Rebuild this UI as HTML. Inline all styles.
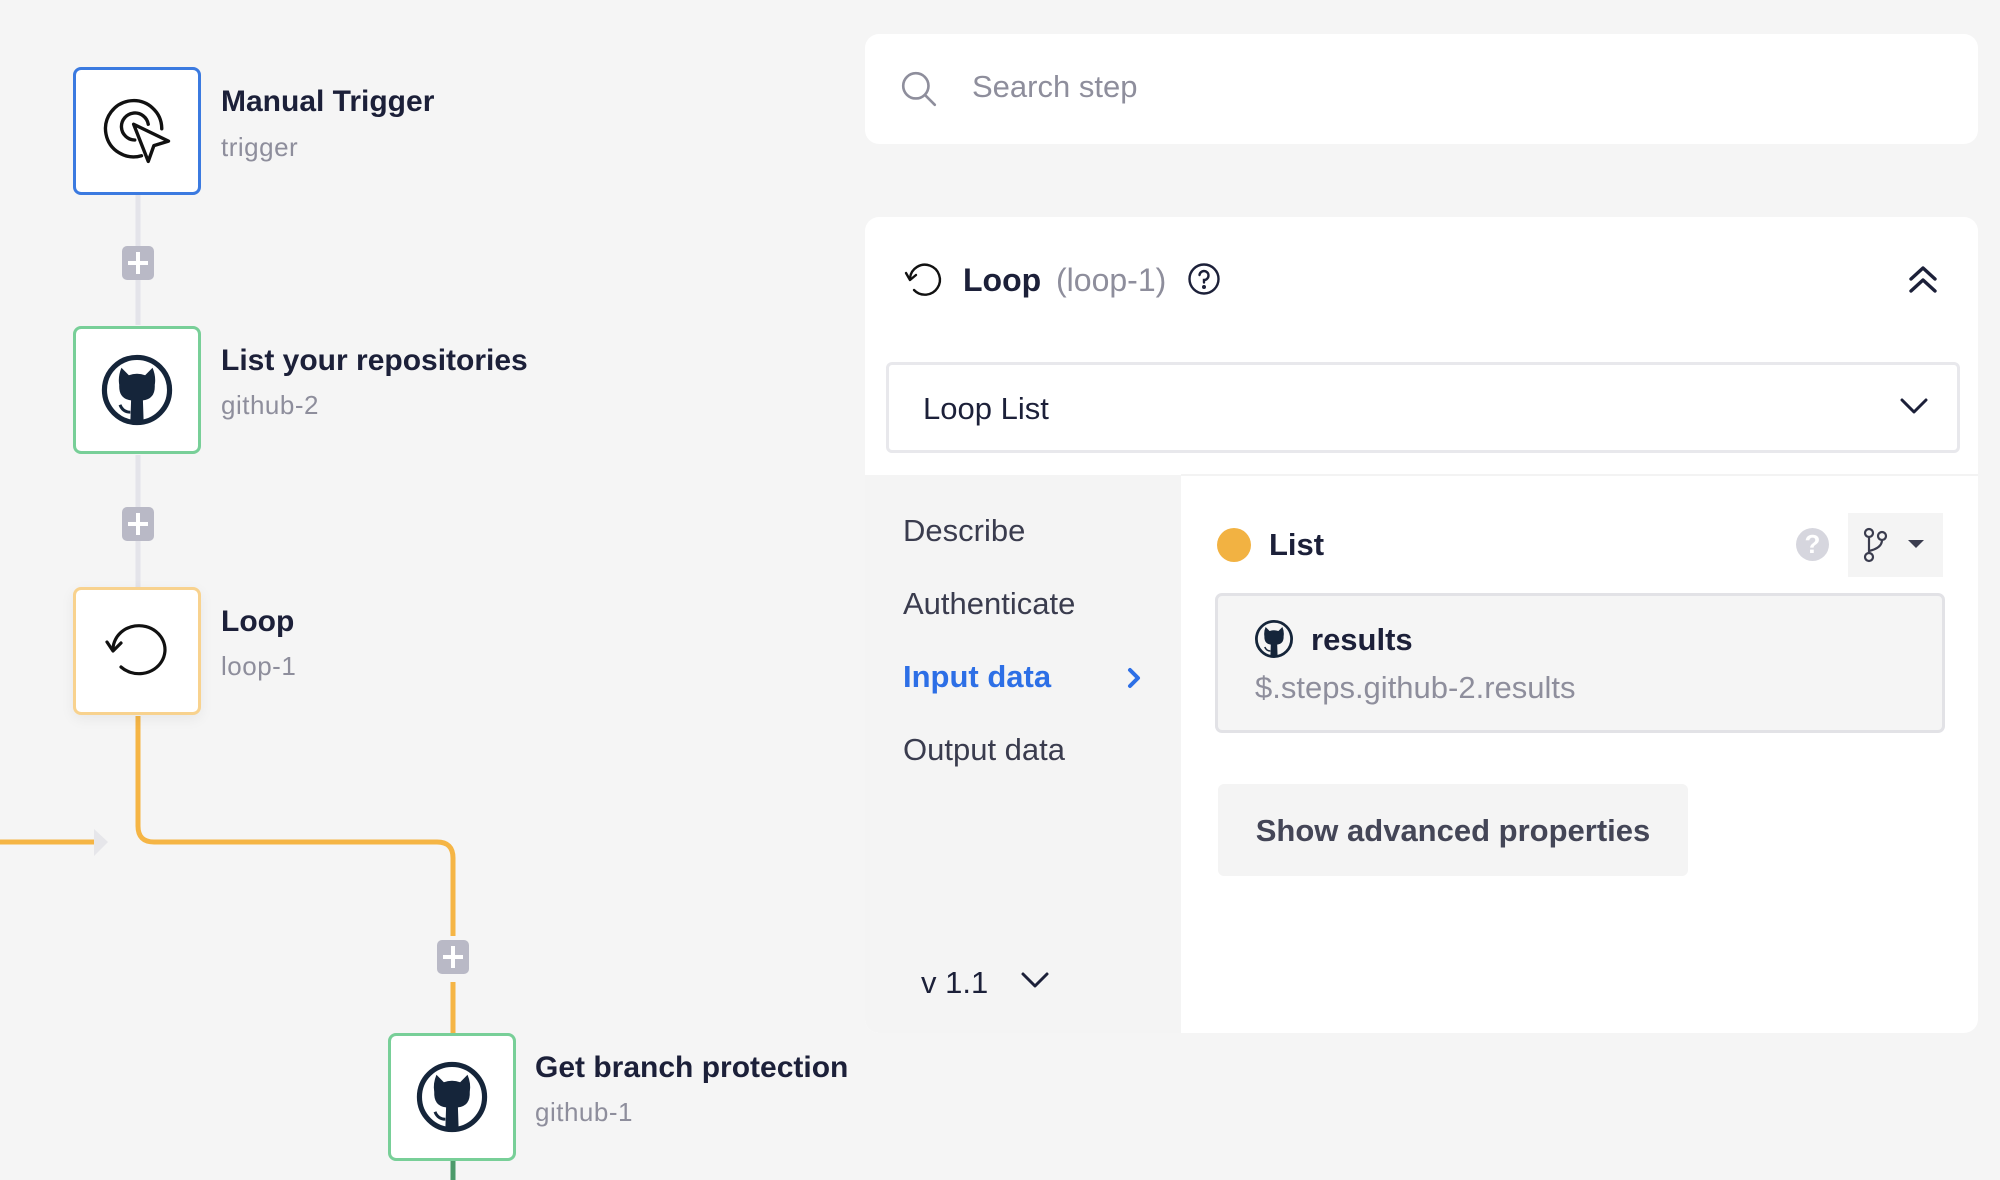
<!DOCTYPE html>
<html><head><meta charset="utf-8"><style>
*{box-sizing:border-box;margin:0;padding:0}
body{width:2000px;height:1180px;background:#f5f5f5;font-family:"Liberation Sans",sans-serif;position:relative;overflow:hidden;color:#1c2039}
.a{position:absolute}
.node{position:absolute;width:128px;height:128px;background:#fff;border:3px solid;border-radius:8px;display:flex;align-items:center;justify-content:center}
.t{position:absolute;font-size:30px;font-weight:bold;color:#1c2039;white-space:nowrap}
.s{position:absolute;font-size:26px;color:#8e8e9c;white-space:nowrap;letter-spacing:0.5px}
.plus{position:absolute;width:32px;height:34px;background:#b9b9c6;border-radius:5px}
.plus:before{content:"";position:absolute;left:6px;right:6px;top:15px;height:4px;background:#fff}
.plus:after{content:"";position:absolute;top:6px;bottom:6px;left:14px;width:4px;background:#fff}
.nav{position:absolute;left:903px;font-size:31px;color:#3a3c4e}
</style></head><body>
<svg class="a" style="left:0;top:0" width="2000" height="1180">
<line x1="138" y1="195" x2="138" y2="325" stroke="#e4e4ea" stroke-width="5"/>
<line x1="138" y1="455" x2="138" y2="587" stroke="#e4e4ea" stroke-width="5"/>
<path d="M138 716 V826 Q138 842 154 842 H437 Q453 842 453 858 V936 M453 982 V1033" fill="none" stroke="#f5b545" stroke-width="5"/>
<line x1="0" y1="842" x2="95" y2="842" stroke="#f5b545" stroke-width="5"/>
<path d="M94 829 L108 842 L94 856 Z" fill="#e6e6ea"/>
<line x1="453" y1="1160" x2="453" y2="1180" stroke="#4c9a6a" stroke-width="5"/>
</svg>
<div class="plus" style="left:122px;top:246px"></div>
<div class="plus" style="left:122px;top:507px"></div>
<div class="plus" style="left:437px;top:940px"></div>

<div class="node" style="left:73px;top:67px;border-color:#3b7ae0">
<svg width="90" height="90" viewBox="0 0 80 80" fill="none" stroke="#111" stroke-width="3" stroke-linejoin="round" stroke-linecap="round">
<path d="M44 62 A25 25 0 1 1 62 38"/><path d="M38 48 A12 12 0 1 1 50 34"/>
<path d="M37 34 L68 49 L55 53 L50 67 Z"/></svg></div>
<div class="t" style="left:221px;top:85px">Manual Trigger</div>
<div class="s" style="left:221px;top:132px">trigger</div>

<svg width="0" height="0" style="position:absolute"><defs><g id="gh">
<circle cx="50" cy="50" r="44" fill="none" stroke="#15253a" stroke-width="7"/>
<path d="M29 20 L39 30 Q50 26 61 30 L71 20 Q76 32 74 43 Q75 62 58 64 L59 94 L41 94 L42 64 Q25 62 26 43 Q24 32 29 20 Z" fill="#15253a"/>
<path d="M41 80 Q31 80 27 70" fill="none" stroke="#15253a" stroke-width="4"/></g></defs></svg>

<div class="node" style="left:73px;top:326px;border-color:#78cf98"><svg width="74" height="74" viewBox="0 0 100 100"><use href="#gh"/></svg></div>
<div class="t" style="left:221px;top:344px">List your repositories</div>
<div class="s" style="left:221px;top:390px">github-2</div>

<div class="node" style="left:73px;top:587px;border-color:#f8d28e;box-shadow:0 4px 14px rgba(0,0,0,0.06)">
<svg width="76" height="76" viewBox="0 0 76 76" fill="none" stroke="#111" stroke-width="3.2" stroke-linecap="round" stroke-linejoin="round">
<path d="M14 36 A26 24 0 1 1 22 54"/><path d="M8 29 L14 38 L22 30"/></svg></div>
<div class="t" style="left:221px;top:605px">Loop</div>
<div class="s" style="left:221px;top:651px">loop-1</div>

<div class="node" style="left:388px;top:1033px;border-color:#78cf98"><svg width="74" height="74" viewBox="0 0 100 100"><use href="#gh"/></svg></div>
<div class="t" style="left:535px;top:1051px">Get branch protection</div>
<div class="s" style="left:535px;top:1097px">github-1</div>

<div class="a" style="left:865px;top:34px;width:1113px;height:110px;background:#fff;border-radius:14px"></div>
<svg class="a" style="left:899px;top:69px" width="40" height="40" viewBox="0 0 38 38" fill="none" stroke="#8e8e9c" stroke-width="2.5" stroke-linecap="round"><circle cx="16" cy="16" r="12"/><path d="M25 25 L34 34"/></svg>
<div class="a" style="left:972px;top:69px;font-size:31px;color:#8e8e9c">Search step</div>

<div class="a" style="left:865px;top:217px;width:1113px;height:816px;background:#fff;border-radius:14px;overflow:hidden">
<div class="a" style="left:0;top:258px;width:316px;height:558px;background:#f4f4f4"></div>
<div class="a" style="left:316px;top:257px;right:0;height:2px;background:#f3f3f3"></div>
</div>
<svg class="a" style="left:902px;top:258px" width="44" height="44" viewBox="0 0 44 44" fill="none" stroke="#111" stroke-width="2.4" stroke-linecap="round" stroke-linejoin="round"><path d="M8 20 A15 15 0 1 1 12 32"/><path d="M4 15 L8 22 L14 17"/></svg>
<div class="a" style="left:963px;top:262px;font-size:32px;font-weight:bold;color:#1c2039">Loop</div>
<div class="a" style="left:1056px;top:262px;font-size:32px;color:#8e8e9c">(loop-1)</div>
<svg class="a" style="left:1187px;top:262px" width="34" height="34" viewBox="0 0 34 34" fill="none" stroke="#1c2039" stroke-width="2.4" stroke-linecap="round"><circle cx="17" cy="17" r="14.5"/><path d="M12.5 13 A4.5 4.5 0 1 1 17 18 V20.5"/><circle cx="17" cy="25" r="0.8" fill="#1c2039"/></svg>
<svg class="a" style="left:1906px;top:262px" width="34" height="34" viewBox="0 0 34 34" fill="none" stroke="#1c2039" stroke-width="3.4" stroke-linecap="round" stroke-linejoin="round"><path d="M5 17 L17 6 L29 17"/><path d="M5 29 L17 18 L29 29"/></svg>

<div class="a" style="left:886px;top:362px;width:1074px;height:91px;border:3px solid #e8e8ec;border-radius:6px;background:#fff"></div>
<div class="a" style="left:923px;top:391px;font-size:31px;color:#1c2039">Loop List</div>
<svg class="a" style="left:1899px;top:397px" width="30" height="20" viewBox="0 0 30 20" fill="none" stroke="#1c2039" stroke-width="3" stroke-linecap="round" stroke-linejoin="round"><path d="M3 3 L15 15 L27 3"/></svg>

<div class="nav" style="top:513px">Describe</div>
<div class="nav" style="top:586px">Authenticate</div>
<div class="nav" style="top:659px;color:#2d6fe6;font-weight:bold">Input data</div>
<svg class="a" style="left:1125px;top:665px" width="18" height="26" viewBox="0 0 18 26" fill="none" stroke="#2d6fe6" stroke-width="4" stroke-linecap="round" stroke-linejoin="round"><path d="M5 5 L13 13 L5 21"/></svg>
<div class="nav" style="top:732px">Output data</div>
<div class="a" style="left:921px;top:965px;font-size:31px;color:#1c2039">v 1.1</div>
<svg class="a" style="left:1020px;top:970px" width="30" height="22" viewBox="0 0 30 22" fill="none" stroke="#1c2039" stroke-width="3" stroke-linecap="round" stroke-linejoin="round"><path d="M3 4 L15 16 L27 4"/></svg>

<div class="a" style="left:1217px;top:528px;width:34px;height:34px;border-radius:50%;background:#f2b242"></div>
<div class="a" style="left:1269px;top:527px;font-size:31px;font-weight:bold;color:#1c2039">List</div>
<div class="a" style="left:1796px;top:528px;width:33px;height:33px;border-radius:50%;background:#d6d6de;color:#fff;font-weight:bold;font-size:26px;text-align:center;line-height:33px">?</div>
<div class="a" style="left:1848px;top:513px;width:95px;height:64px;background:#f4f4f4"></div>
<svg class="a" style="left:1860px;top:526px" width="34" height="38" viewBox="0 0 34 38" fill="none" stroke="#3a3c4e" stroke-width="2.2"><circle cx="9" cy="7" r="4"/><circle cx="22" cy="10" r="4"/><circle cx="9" cy="31" r="4"/><path d="M9 11 V27 M22 14 Q22 22 9 25"/></svg>
<svg class="a" style="left:1906px;top:538px" width="20" height="12" viewBox="0 0 20 12"><path d="M2 2 L18 2 L10 10 Z" fill="#3a3c4e"/></svg>

<div class="a" style="left:1215px;top:593px;width:730px;height:140px;border:3px solid #e2e2e6;border-radius:7px;background:#f5f5f5"></div>
<svg class="a" style="left:1254px;top:619px" width="40" height="40" viewBox="0 0 100 100"><use href="#gh"/></svg>
<div class="a" style="left:1311px;top:622px;font-size:31px;font-weight:bold;color:#1c2039">results</div>
<div class="a" style="left:1255px;top:670px;font-size:31px;color:#8e8e9c">$.steps.github-2.results</div>

<div class="a" style="left:1218px;top:784px;width:470px;height:92px;background:#f4f4f4;border-radius:6px;font-size:31px;font-weight:bold;color:#444657;text-align:center;line-height:94px">Show advanced properties</div>
</body></html>
